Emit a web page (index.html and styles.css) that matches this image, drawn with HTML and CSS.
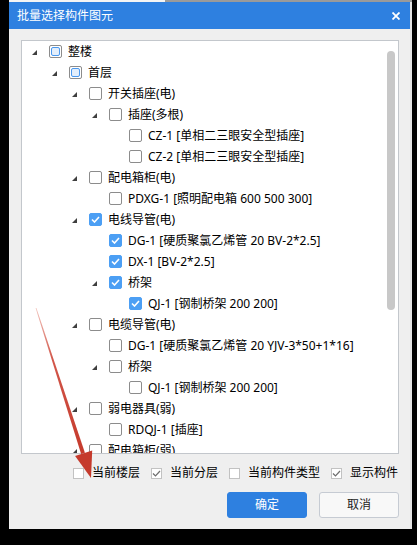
FILE: index.html
```html
<!DOCTYPE html>
<html lang="zh-CN">
<head>
<meta charset="utf-8">
<title>批量选择构件图元</title>
<link rel="stylesheet" href="styles.css">
</head>
<body>
<div class="topstrip"><div class="ts-white"></div><div class="ts-gray"></div></div>
<div class="dialog">
  <div class="titlebar">
    <span class="title">批量选择构件图元</span>
    <svg class="close" width="8" height="8" viewBox="0 0 8 8"><path d="M0.5 0.5 L7.5 7.5 M7.5 0.5 L0.5 7.5" stroke="#fff" stroke-width="1.8" fill="none"/></svg>
  </div>
  <div class="body">
    <div class="tree-panel">
      <div class="tree">
        <div class="row l0"><span class="tw"><svg class="tri" width="5" height="5" viewBox="0 0 5 5"><polygon points="5,0 5,5 0,5"/></svg></span><span class="cb ind"><i></i></span><span class="lbl">整楼</span></div>
        <div class="row l1"><span class="tw"><svg class="tri" width="5" height="5" viewBox="0 0 5 5"><polygon points="5,0 5,5 0,5"/></svg></span><span class="cb ind"><i></i></span><span class="lbl">首层</span></div>
        <div class="row l2"><span class="tw"><svg class="tri" width="5" height="5" viewBox="0 0 5 5"><polygon points="5,0 5,5 0,5"/></svg></span><span class="cb"></span><span class="lbl">开关插座(电)</span></div>
        <div class="row l3"><span class="tw"><svg class="tri" width="5" height="5" viewBox="0 0 5 5"><polygon points="5,0 5,5 0,5"/></svg></span><span class="cb"></span><span class="lbl">插座(多根)</span></div>
        <div class="row l4"><span class="tw"></span><span class="cb"></span><span class="lbl">CZ-1 [单相二三眼安全型插座]</span></div>
        <div class="row l4"><span class="tw"></span><span class="cb"></span><span class="lbl">CZ-2 [单相二三眼安全型插座]</span></div>
        <div class="row l2"><span class="tw"><svg class="tri" width="5" height="5" viewBox="0 0 5 5"><polygon points="5,0 5,5 0,5"/></svg></span><span class="cb"></span><span class="lbl">配电箱柜(电)</span></div>
        <div class="row l3"><span class="tw"></span><span class="cb"></span><span class="lbl">PDXG-1 [照明配电箱 600 500 300]</span></div>
        <div class="row l2"><span class="tw"><svg class="tri" width="5" height="5" viewBox="0 0 5 5"><polygon points="5,0 5,5 0,5"/></svg></span><span class="cb chk"><svg width="9" height="7" viewBox="0 0 9 7"><path d="M1 3.5 L3.5 6 L8 1" stroke="#fff" stroke-width="1.6" fill="none"/></svg></span><span class="lbl">电线导管(电)</span></div>
        <div class="row l3"><span class="tw"></span><span class="cb chk"><svg width="9" height="7" viewBox="0 0 9 7"><path d="M1 3.5 L3.5 6 L8 1" stroke="#fff" stroke-width="1.6" fill="none"/></svg></span><span class="lbl">DG-1 [硬质聚氯乙烯管 20 BV-2*2.5]</span></div>
        <div class="row l3"><span class="tw"></span><span class="cb chk"><svg width="9" height="7" viewBox="0 0 9 7"><path d="M1 3.5 L3.5 6 L8 1" stroke="#fff" stroke-width="1.6" fill="none"/></svg></span><span class="lbl">DX-1 [BV-2*2.5]</span></div>
        <div class="row l3"><span class="tw"><svg class="tri" width="5" height="5" viewBox="0 0 5 5"><polygon points="5,0 5,5 0,5"/></svg></span><span class="cb chk"><svg width="9" height="7" viewBox="0 0 9 7"><path d="M1 3.5 L3.5 6 L8 1" stroke="#fff" stroke-width="1.6" fill="none"/></svg></span><span class="lbl">桥架</span></div>
        <div class="row l4"><span class="tw"></span><span class="cb chk"><svg width="9" height="7" viewBox="0 0 9 7"><path d="M1 3.5 L3.5 6 L8 1" stroke="#fff" stroke-width="1.6" fill="none"/></svg></span><span class="lbl">QJ-1 [钢制桥架 200 200]</span></div>
        <div class="row l2"><span class="tw"><svg class="tri" width="5" height="5" viewBox="0 0 5 5"><polygon points="5,0 5,5 0,5"/></svg></span><span class="cb"></span><span class="lbl">电缆导管(电)</span></div>
        <div class="row l3"><span class="tw"></span><span class="cb"></span><span class="lbl">DG-1 [硬质聚氯乙烯管 20 YJV-3*50+1*16]</span></div>
        <div class="row l3"><span class="tw"><svg class="tri" width="5" height="5" viewBox="0 0 5 5"><polygon points="5,0 5,5 0,5"/></svg></span><span class="cb"></span><span class="lbl">桥架</span></div>
        <div class="row l4"><span class="tw"></span><span class="cb"></span><span class="lbl">QJ-1 [钢制桥架 200 200]</span></div>
        <div class="row l2"><span class="tw"><svg class="tri" width="5" height="5" viewBox="0 0 5 5"><polygon points="5,0 5,5 0,5"/></svg></span><span class="cb"></span><span class="lbl">弱电器具(弱)</span></div>
        <div class="row l3"><span class="tw"></span><span class="cb"></span><span class="lbl">RDQJ-1 [插座]</span></div>
        <div class="row l2"><span class="tw"><svg class="tri" width="5" height="5" viewBox="0 0 5 5"><polygon points="5,0 5,5 0,5"/></svg></span><span class="cb"></span><span class="lbl">配电箱柜(弱)</span></div>
      </div>
      <div class="track"><div class="thumb"></div></div>
    </div>
    <div class="options">
      <label class="opt"><span class="scb"></span><span>当前楼层</span></label>
      <label class="opt"><span class="scb on"><svg width="9" height="7" viewBox="0 0 9 7"><path d="M1 3.5 L3.5 6 L8 1" stroke="#6e6e6e" stroke-width="1.2" fill="none"/></svg></span><span>当前分层</span></label>
      <label class="opt"><span class="scb"></span><span>当前构件类型</span></label>
      <label class="opt"><span class="scb on"><svg width="9" height="7" viewBox="0 0 9 7"><path d="M1 3.5 L3.5 6 L8 1" stroke="#6e6e6e" stroke-width="1.2" fill="none"/></svg></span><span>显示构件</span></label>
    </div>
    <div class="buttons">
      <button class="btn primary">确定</button>
      <button class="btn">取消</button>
    </div>
  </div>
</div>
<svg class="annot" width="417" height="545" viewBox="0 0 417 545">
  <defs>
    <linearGradient id="fade" x1="36" y1="308" x2="83" y2="453" gradientUnits="userSpaceOnUse">
      <stop offset="0" stop-color="#f2c4bd"/>
      <stop offset="0.35" stop-color="#d2574a"/>
      <stop offset="1" stop-color="#c53a2c"/>
    </linearGradient>
  </defs>
  <polygon points="35.6,308 36.4,308 84.9,452.7 81.1,453.9" fill="url(#fade)"/>
  <polygon points="91,478 92.2,450.4 75.1,456" fill="#c53a2c"/>
</svg>
</body>
</html>
```
FILE: styles.css
```css
* { box-sizing: border-box; }
html, body { margin: 0; padding: 0; }
body {
  background: #000;
  width: 417px;
  height: 545px;
  overflow: hidden;
  position: relative;
  font-family: "Noto Sans", "Noto Sans CJK SC", sans-serif;
  font-size: 12px;
  color: #000;
}
.topstrip {
  display: flex;
  height: 2px;
  margin-left: 9px;
  width: 403px;
}
.ts-white { width: 157px; background: #f4f4f4; border-right: 1px solid #9a9a9a; }
.ts-gray { flex: 1; background: #9a9a9a; }
.dialog {
  margin-left: 9px;
  width: 403px;
  background: #efefef;
  border-right: 2px solid #e4e4e4;
}
.titlebar {
  height: 27px;
  background: #2e80e0;
  display: flex;
  align-items: center;
  justify-content: space-between;
  padding: 0 10px 0 8px;
  color: #fff;
}
.title { font-size: 12px; line-height: 1; margin-top: 1px; }
.close { display: block; }
.body {
  padding: 11px 11px 11px 12px;
}
.tree-panel {
  height: 414px;
  border: 1px solid #c3c7cc;
  background: #fff;
  display: flex;
  overflow: hidden;
}
.tree { flex: 1; overflow: hidden; }
.row {
  height: 21px;
  display: flex;
  align-items: center;
  white-space: nowrap;
}
.l1 { padding-left: 20px; }
.l2 { padding-left: 40px; }
.l3 { padding-left: 60px; }
.l4 { padding-left: 80px; }
.tw {
  width: 27px;
  flex: none;
  display: flex;
  align-items: center;
  padding-left: 10px;
  padding-top: 1px;
}
.tri { display: block; fill: #3f3f3f; }
.cb {
  width: 13px;
  height: 13px;
  flex: none;
  border: 1px solid #8c8c8c;
  border-radius: 2px;
  background: #fff;
  display: flex;
  align-items: center;
  justify-content: center;
}
.cb.ind i {
  display: block;
  width: 9px;
  height: 9px;
  border: 1px solid #4a98ee;
  border-radius: 2px;
  background: #e3eefb;
}
.cb.chk { background: #4c9ff4; border-color: #4c9ff4; }
.cb svg { display: block; }
.lbl { margin-left: 6px; line-height: 1; }
.track {
  width: 11px;
  flex: none;
  padding-top: 10px;
}
.thumb {
  width: 8px;
  height: 259px;
  background: #c8c8c8;
  border-radius: 4px;
}
.options {
  display: flex;
  align-items: center;
  height: 20px;
  margin-top: 9px;
  padding-left: 52px;
  gap: 11px;
}
.opt { display: flex; align-items: center; gap: 8px; line-height: 1; }
.scb {
  width: 11px;
  height: 11px;
  border: 1px solid #c2c2c2;
  background: #fff;
  display: flex;
  align-items: center;
  justify-content: center;
}
.scb svg { display: block; }
.buttons {
  display: flex;
  justify-content: flex-end;
  gap: 12px;
  margin-top: 9px;
  padding-right: 0;
}
.btn {
  width: 80px;
  height: 26px;
  border-radius: 3px;
  border: 1px solid #c6cbd3;
  background: #f8f8f8;
  font-family: inherit;
  font-size: 12px;
  color: #222;
  padding: 0;
  line-height: 1;
}
.btn.primary { background: #2e80e0; border-color: #2e80e0; color: #fff; }
.annot { position: absolute; left: 0; top: 0; pointer-events: none; }
```
